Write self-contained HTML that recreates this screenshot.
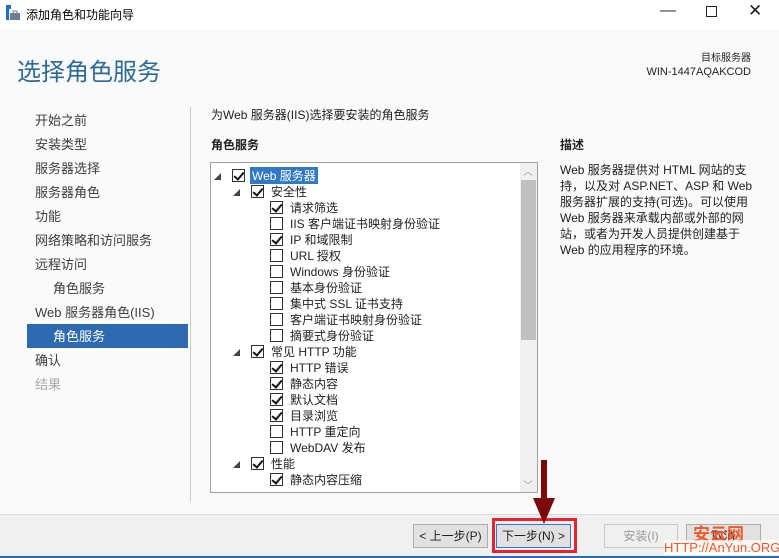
<!DOCTYPE html>
<html><head><meta charset="utf-8"><style>
*{margin:0;padding:0;box-sizing:border-box}
body{width:779px;height:558px;position:relative;overflow:hidden;background:#fafafa;font-family:"Liberation Sans","Noto Sans CJK SC",sans-serif;font-size:12px;color:#1e1e1e}
.a{position:absolute;white-space:nowrap}
.nav{left:35px;font-size:13px;color:#3c3c3c}
.cb{position:absolute;width:13px;height:13px;border:1px solid #333;background:#fff}
.cb.c::after{content:"";position:absolute;left:3px;top:0px;width:4px;height:8px;border:solid #111;border-width:0 2px 2px 0;transform:rotate(40deg)}
.row{position:absolute;font-size:12px;color:#222;white-space:nowrap}
.tri{position:absolute;width:0;height:0;border-left:7px solid transparent;border-bottom:7px solid #444}
.btn{position:absolute;height:24px;border:1px solid #adadad;background:#e1e1e1;font-size:12px;text-align:center;line-height:22px}
</style></head><body>
<div class="a" style="left:0;top:0;width:779px;height:29px;background:#fff"></div>
<svg class="a" style="left:5px;top:5px" width="16" height="16"><rect x="1" y="0" width="5" height="4" fill="#1e6fc6"/><rect x="1" y="4" width="3" height="11" fill="#1e6fc6"/><rect x="5" y="8" width="10" height="7" fill="#6b7f99"/><rect x="8" y="6" width="4" height="3" fill="none" stroke="#6b7f99"/></svg>
<div class="a" style="left:26px;top:6px;font-size:12px;color:#000">添加角色和功能向导</div>
<div class="a" style="left:660px;top:2px;font-size:16px;color:#333">—</div>
<div class="a" style="left:706px;top:6px;width:11px;height:11px;border:1px solid #222"></div>
<div class="a" style="left:748px;top:1px;font-size:17px;color:#222">✕</div>
<div class="a" style="left:17px;top:52px;font-size:24px;color:#2d6a96">选择角色服务</div>
<div class="a" style="right:28px;top:53px;font-size:10px;line-height:12px;text-align:right;color:#222">目标服务器</div>
<div class="a" style="right:28px;top:66px;font-size:11px;line-height:13px;color:#222">WIN-1447AQAKCOD</div>
<div class="a nav" style="top:110px">开始之前</div>
<div class="a nav" style="top:134px">安装类型</div>
<div class="a nav" style="top:158px">服务器选择</div>
<div class="a nav" style="top:182px">服务器角色</div>
<div class="a nav" style="top:206px">功能</div>
<div class="a nav" style="top:230px">网络策略和访问服务</div>
<div class="a nav" style="top:254px">远程访问</div>
<div class="a nav" style="top:278px;left:53px">角色服务</div>
<div class="a nav" style="top:302px">Web 服务器角色(IIS)</div>
<div class="a" style="left:27px;top:324px;width:161px;height:24px;background:#2d6ab0"></div>
<div class="a nav" style="top:326px;left:53px;color:#fff">角色服务</div>
<div class="a nav" style="top:350px">确认</div>
<div class="a nav" style="top:374px;color:#a8a8a8">结果</div>
<div class="a" style="left:190px;top:107px;width:1px;height:395px;background:#c8c8c8"></div>
<div class="a" style="left:211px;top:106px;font-size:12px">为Web 服务器(IIS)选择要安装的角色服务</div>
<div class="a" style="left:211px;top:136px;font-size:12px;font-weight:bold">角色服务</div>
<div class="a" style="left:560px;top:136px;font-size:12px;font-weight:bold">描述</div>
<div class="a" style="left:560px;top:162px;width:205px;font-size:12px;line-height:16px;white-space:normal">Web 服务器提供对 HTML 网站的支持，以及对 ASP.NET、ASP 和 Web 服务器扩展的支持(可选)。可以使用 Web 服务器来承载内部或外部的网站，或者为开发人员提供创建基于 Web 的应用程序的环境。</div>
<div class="a" style="left:210px;top:162px;width:328px;height:331px;border:1px solid #a0a0a0;background:#fff;overflow:hidden">
<div class="a" style="right:0;top:0;width:17px;height:329px;background:#f0f0f0"></div>
<div class="a" style="right:1px;top:17px;width:15px;height:160px;background:#c0c0c0"></div>
<div class="a" style="right:4px;top:0px;color:#999;font-size:10px">︿</div>
<div class="a" style="right:4px;top:314px;color:#999;font-size:10px">﹀</div>
<div id="t"></div>
</div>
<div class="a" style="left:0;top:514px;width:779px;height:44px;background:#f0f0f0;border-top:1px solid #dcdcdc"></div>
<div class="a" style="left:0;top:556px;width:779px;height:2px;background:#2b6cb0"></div>
<div class="btn" style="left:413px;top:524px;width:75px">&lt; 上一步(P)</div>
<div class="a" style="left:492px;top:518px;width:85px;height:35px;border:3px solid #e8222e"></div>
<div class="btn" style="left:496px;top:524px;width:75px;border-color:#2e78d0">下一步(N) &gt;</div>
<div class="btn" style="left:604px;top:524px;width:74px;background:#f0f0f0;border-color:#c8c8c8;color:#999">安装(I)</div>
<div class="btn" style="left:686px;top:524px;width:75px">取消</div>
<div class="a" style="left:693px;top:520px;font-size:17px;color:#f05a28;font-weight:bold">安云网</div>
<div class="a" style="left:664px;top:540px;font-size:13px;color:#f05a28;background:rgba(255,255,255,.7)">HTTP://AnYun.ORG</div>
<svg class="a" style="left:532px;top:460px" width="24" height="66"><rect x="9" y="0" width="6" height="42" fill="#7a0a0a"/><polygon points="1,38 23,38 12,64" fill="#7a0a0a"/></svg>
<script>
var rows=[[0,1,1,"Web 服务器"],[1,1,1,"安全性"],[2,0,1,"请求筛选"],[2,0,0,"IIS 客户端证书映射身份验证"],[2,0,1,"IP 和域限制"],[2,0,0,"URL 授权"],[2,0,0,"Windows 身份验证"],[2,0,0,"基本身份验证"],[2,0,0,"集中式 SSL 证书支持"],[2,0,0,"客户端证书映射身份验证"],[2,0,0,"摘要式身份验证"],[1,1,1,"常见 HTTP 功能"],[2,0,1,"HTTP 错误"],[2,0,1,"静态内容"],[2,0,1,"默认文档"],[2,0,1,"目录浏览"],[2,0,0,"HTTP 重定向"],[2,0,0,"WebDAV 发布"],[1,1,1,"性能"],[2,0,1,"静态内容压缩"]];
var h="";rows.forEach(function(r,i){var y=6+i*16;var x=21+r[0]*19;
if(r[1])h+='<div class="tri" style="left:'+(x-18)+'px;top:'+(y+4)+'px"></div>';
h+='<div class="cb'+(r[2]?' c':'')+'" style="left:'+x+'px;top:'+y+'px"></div>';
var st=i==0?'background:#3178c6;color:#fff;padding:0 2px;':'';
h+='<div class="row" style="left:'+(x+20-(i==0?2:0))+'px;top:'+(y-2)+'px;'+st+'">'+r[3]+'</div>';});
document.getElementById("t").innerHTML=h;
</script>
</body></html>
